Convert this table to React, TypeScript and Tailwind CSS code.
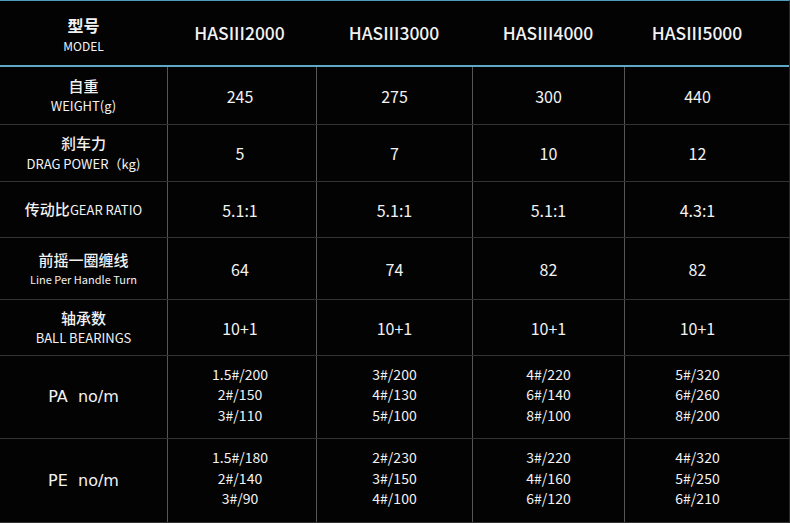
const models = ['HASIII2000', 'HASIII3000', 'HASIII4000', 'HASIII5000'];

type Row = {
  h: string;
  zh?: string;
  en?: string;
  inline?: boolean;
  big?: string;
  enClass?: string;
  values: string[][];
};

const rows: Row[] = [
  { h: 'h-[58px]', zh: '自重', en: 'WEIGHT(g)', enClass: 'text-[13px]', values: [['245'], ['275'], ['300'], ['440']] },
  { h: 'h-[57px]', zh: '刹车力', en: 'DRAG POWER（kg)', enClass: 'text-[13px]', values: [['5'], ['7'], ['10'], ['12']] },
  { h: 'h-[56px]', zh: '传动比', en: 'GEAR RATIO', inline: true, values: [['5.1:1'], ['5.1:1'], ['5.1:1'], ['4.3:1']] },
  { h: 'h-[62px]', zh: '前摇一圈缠线', en: 'Line Per Handle Turn', enClass: 'text-[11px]', values: [['64'], ['74'], ['82'], ['82']] },
  { h: 'h-[56px]', zh: '轴承数', en: 'BALL BEARINGS', enClass: 'text-[13px]', values: [['10+1'], ['10+1'], ['10+1'], ['10+1']] },
  {
    h: 'h-[83px]',
    big: 'PA  no/m',
    values: [
      ['1.5#/200', '2#/150', '3#/110'],
      ['3#/200', '4#/130', '5#/100'],
      ['4#/220', '6#/140', '8#/100'],
      ['5#/320', '6#/260', '8#/200'],
    ],
  },
  {
    h: 'h-[84px]',
    big: 'PE  no/m',
    values: [
      ['1.5#/180', '2#/140', '3#/90'],
      ['2#/230', '3#/150', '4#/100'],
      ['3#/220', '4#/160', '6#/120'],
      ['4#/320', '5#/250', '6#/210'],
    ],
  },
];

const grid = 'grid grid-cols-[167px_149px_156px_152px_166px]';

export default function App() {
  return (
    <div
      className="w-[790px] h-[523px] bg-[#030303] text-[#f2f2f2] overflow-hidden border-t border-t-[#4f9dbd] border-r border-r-[#2a2a2a]"
      style={{ fontFamily: '"Noto Sans CJK SC", "Noto Sans", sans-serif' }}
    >
      {/* header */}
      <div className={`${grid} h-[66px] border-b-2 border-b-[#5fa7c7]`}>
        <div className="flex flex-col items-center justify-center leading-tight pt-[1px]">
          <span className="text-[16px] font-bold">型号</span>
          <span className="text-[12px] mt-[3px]">MODEL</span>
        </div>
        {models.map((m, j) => (
          <div
            key={m}
            className={`flex items-center justify-center text-[17.5px] font-medium ${j === 3 ? 'pr-[20px]' : ''} ${j === 0 ? 'pr-[4px]' : ''}`}
          >
            {m}
          </div>
        ))}
      </div>

      {rows.map((r, i) => (
        <div key={i} className={`${grid} ${r.h} border-b border-b-[#333]`}>
          <div className="flex flex-col items-center justify-center leading-tight">
            {r.big ? (
              <span className="whitespace-pre" style={{ fontFamily: '"DejaVu Sans", sans-serif', fontSize: 16 }}>
                {r.big}
              </span>
            ) : r.inline ? (
              <span className="text-[15px] font-medium">
                {r.zh}
                <span className="text-[13px] font-normal">{r.en}</span>
              </span>
            ) : (
              <>
                <span className="text-[15px] font-medium">{r.zh}</span>
                <span className={`${r.enClass} mt-[3px]`}>{r.en}</span>
              </>
            )}
          </div>
          {r.values.map((v, j) => (
            <div
              key={j}
              className={`flex flex-col items-center justify-center border-l border-l-[#565656] ${j === 3 ? 'pr-[20px]' : ''} ${j === 0 ? 'pr-[4px]' : ''} ${v.length > 1 ? 'pb-[5px]' : ''}`}
            >
              {v.length === 1 ? (
                <span className="text-[16px]">{v[0]}</span>
              ) : (
                v.map((t) => (
                  <span key={t} className="text-[14px] leading-[20.5px]">
                    {t}
                  </span>
                ))
              )}
            </div>
          ))}
        </div>
      ))}
    </div>
  );
}
